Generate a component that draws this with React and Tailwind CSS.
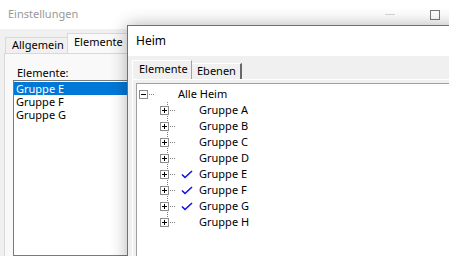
import React from "react";

const font = { fontFamily: '"Noto Sans", sans-serif' };

function ExpandBox({ open }) {
  return (
    <svg width="9" height="9" viewBox="0 0 9 9" className="shrink-0">
      <rect x="0.5" y="0.5" width="8" height="8" fill="white" stroke="#8c8c8c" />
      <path d="M2 4.5H7" stroke="black" />
      {!open && <path d="M4.5 2V7" stroke="black" />}
    </svg>
  );
}

function Check() {
  return (
    <svg width="12" height="9" viewBox="0 0 12 9" className="shrink-0">
      <path d="M1 4.5L4 7.5L11 1" fill="none" stroke="#1010e8" strokeWidth="1.6" />
    </svg>
  );
}

function TreeRow({ label, child, checked, open }) {
  return (
    <div className="relative flex h-[16px] items-center">
      {child && <span className="w-[21px] shrink-0" />}
      <ExpandBox open={open} />
      <span className="ml-[1px] h-px w-[6px] shrink-0 bg-[repeating-linear-gradient(90deg,#808080_0_1px,transparent_1px_2px)]" />
      <span className="ml-[5px] flex w-[12px] shrink-0 justify-center">{checked && <Check />}</span>
      <span className="ml-[6px] whitespace-nowrap text-[11px] leading-[16px] text-black">{label}</span>
    </div>
  );
}

const groups = [
  { label: "Gruppe A" },
  { label: "Gruppe B" },
  { label: "Gruppe C" },
  { label: "Gruppe D" },
  { label: "Gruppe E", checked: true },
  { label: "Gruppe F", checked: true },
  { label: "Gruppe G", checked: true },
  { label: "Gruppe H" },
];

export default function App() {
  return (
    <div className="relative h-[256px] w-[449px] overflow-hidden bg-[#f0f0f0]" style={font}>
      {/* Einstellungen (inactive window behind) */}
      <div className="flex h-full flex-col">
        <div className="flex h-[29px] shrink-0 items-center bg-white pl-[8px] pr-[9px]">
          <span className="text-[11px] text-[#999999]">Einstellungen</span>
          <span className="ml-auto h-px w-[10px] bg-[#d6d6d6]" />
          <span className="ml-[35px] h-[10px] w-[10px] border border-[#7a7a7a]" />
        </div>
        <div className="flex h-[24px] shrink-0 items-end pl-[5px]">
          <div className="flex h-[16px] w-[63px] items-center border border-b-0 border-[#d9d9d9] bg-[#f0f0f0] pl-[6px] text-[11px] text-black">
            Allgemein
          </div>
          <div className="-ml-px flex h-[20px] w-[80px] items-center border border-b-0 border-[#d9d9d9] bg-[#f9f9f9] pb-[3px] pl-[6px] text-[11px] text-black">
            Elemente
          </div>
        </div>
        <div className="ml-[4px] flex flex-1 flex-col border-l border-t border-[#d9d9d9] bg-[#f9f9f9]">
          <div className="ml-[12px] mt-[11px] h-[15px] text-[11px] leading-[15px] text-black">Elemente:</div>
          <div className="ml-[8px] flex-1 border border-[#7a7a7a] bg-white pt-px text-[11px] leading-[13px]">
            <div className="h-[13px] bg-[#0078d7] pl-[2px] text-white">Gruppe E</div>
            <div className="h-[13px] pl-[2px] text-black">Gruppe F</div>
            <div className="h-[13px] pl-[2px] text-black">Gruppe G</div>
          </div>
        </div>
      </div>

      {/* Heim (active window on top) */}
      <div className="absolute left-[127px] top-[25px] flex h-[260px] w-[340px] flex-col border border-[#2b7fd6] bg-[#f0f0f0] shadow-[0_0_16px_rgba(0,0,0,0.3)]">
        <div className="flex h-[30px] shrink-0 items-center bg-white pl-[8px] text-[12px] text-black">Heim</div>
        <div className="flex flex-1 flex-col pl-[4px] pt-[4px]">
          <div className="flex h-[19px] shrink-0 items-end">
            <div className="flex h-[19px] w-[60px] items-center border-l border-t border-r border-l-white border-t-white border-r-[#a0a0a0] bg-[#f0f0f0] pb-[1px] pl-[6px] text-[11px] text-black">
              Elemente
            </div>
            <div className="flex h-[16px] w-[50px] items-center border-t border-r-2 border-t-white border-r-[#696969] bg-[#f0f0f0] pl-[5px] text-[11px] text-black">
              Ebenen
            </div>
          </div>
          <div className="flex flex-1 border-l border-t border-white pl-[3px] pt-[3px]">
            <div className="relative flex-1 border-l border-t border-[#a0a0a0] bg-white pl-[2px] pt-[2px]">
              <div className="relative">
                <span className="absolute left-[28px] top-[16px] h-[116px] w-px bg-[repeating-linear-gradient(180deg,#808080_0_1px,transparent_1px_2px)]" />
                <TreeRow label="Alle Heim" open />
                {groups.map((g) => (
                  <TreeRow key={g.label} label={g.label} checked={g.checked} child />
                ))}
              </div>
            </div>
          </div>
        </div>
      </div>
    </div>
  );
}
